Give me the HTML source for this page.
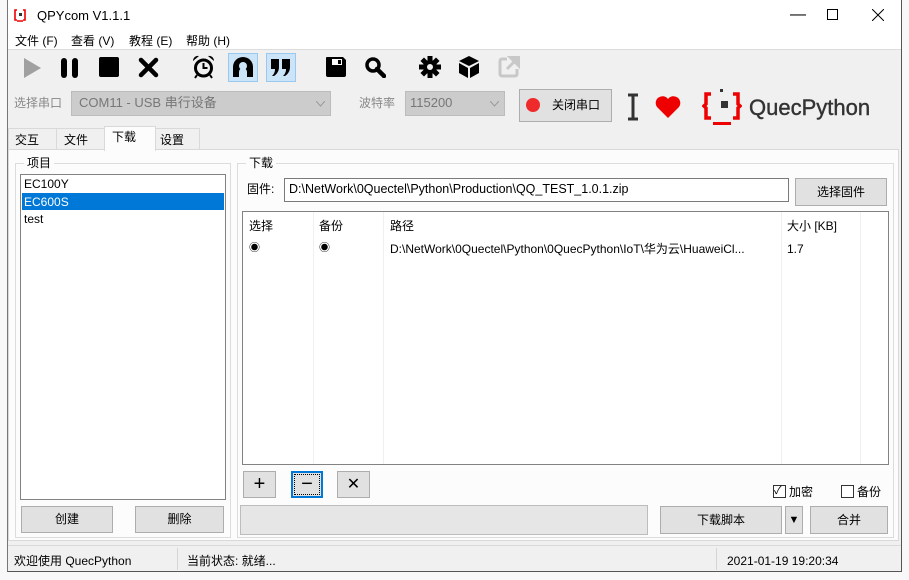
<!DOCTYPE html>
<html><head><meta charset="utf-8"><style>
*{box-sizing:border-box;margin:0;padding:0}
body{width:909px;height:580px;background:#f8f8f8;font-family:"Liberation Sans","Noto Sans CJK SC",sans-serif;font-size:12px;color:#000;position:relative;overflow:hidden}
.a{position:absolute}
.t{position:absolute;white-space:nowrap;line-height:14px}
.btn{position:absolute;background:#e1e1e1;border:1px solid #adadad;text-align:center;font-size:12px}
.white{background:#fff}
svg{position:absolute}
</style></head><body>
<div class="a" style="left:7px;top:0;width:895px;height:572px;border-left:1px solid #777;border-right:1px solid #555;border-bottom:1px solid #555;background:#f0f0f0"></div>
<div class="a" style="left:8px;top:0;width:893px;height:50px;background:#fff;border-bottom:1px solid #ddd"></div>
<!-- title -->
<svg style="left:13px;top:8px" width="14" height="14" viewBox="0 0 14 14"><path d="M4 2H2v10h2M10 2h2v10h-2M4 13h6" stroke="#e00" stroke-width="1.6" fill="none"/><rect x="6" y="5" width="3" height="3" fill="#333"/></svg>
<div class="t" style="left:37px;top:9px;font-size:13px">QPYcom V1.1.1</div>
<div class="t" style="left:790px;top:8px;font-size:16px">&#x2014;</div>
<div class="a" style="left:827px;top:9px;width:11px;height:11px;border:1px solid #000"></div>
<svg style="left:872px;top:9px" width="12" height="12"><path d="M0 0L12 12M12 0L0 12" stroke="#000" stroke-width="1"/></svg>
<div class="t" style="left:15px;top:34px">文件 (F)</div>
<div class="t" style="left:71px;top:34px">查看 (V)</div>
<div class="t" style="left:129px;top:34px">教程 (E)</div>
<div class="t" style="left:186px;top:34px">帮助 (H)</div>
<!-- toolbar -->
<svg style="left:22px;top:57px" width="20" height="22"><path d="M2 1L19 11L2 21Z" fill="#a0a0a0"/></svg>
<svg style="left:60px;top:57px" width="20" height="22"><rect x="1" y="1" width="6" height="20" rx="3" fill="#000"/><rect x="12" y="1" width="6" height="20" rx="3" fill="#000"/></svg>
<svg style="left:99px;top:57px" width="21" height="21"><rect x="0" y="0" width="20" height="20" rx="2" fill="#000"/></svg>
<svg style="left:138px;top:57px" width="21" height="21"><path d="M3 3L18 18M18 3L3 18" stroke="#000" stroke-width="4.5" stroke-linecap="round"/></svg>
<svg style="left:192px;top:55px" width="23" height="24" viewBox="0 0 23 24"><circle cx="11.5" cy="13" r="8" fill="none" stroke="#000" stroke-width="3"/><path d="M11.5 8v5h4" stroke="#000" stroke-width="2" fill="none"/><path d="M1 6a5 5 0 0 1 6-5zM22 6a5 5 0 0 0-6-5z" fill="#000"/><path d="M5 20l-2 3M18 20l2 3" stroke="#000" stroke-width="2"/></svg>
<div class="a" style="left:228px;top:53px;width:30px;height:29px;background:#cce4f7;border:1px solid #99c9ef"></div>
<svg style="left:232px;top:56px" width="22" height="22" viewBox="0 0 22 22"><path d="M11 1a10 10 0 0 0-10 10v10h6v-5a4 4 0 0 1 8 0v5h6v-10A10 10 0 0 0 11 1z" fill="#000"/><circle cx="11" cy="10" r="4" fill="#cce4f7"/><circle cx="11" cy="16" r="2" fill="#cce4f7"/></svg>
<div class="a" style="left:266px;top:53px;width:30px;height:29px;background:#cce4f7;border:1px solid #99c9ef"></div>
<svg style="left:270px;top:58px" width="22" height="20" viewBox="0 0 22 20"><path d="M1 1h8v8c0 4-2 7-5 9H2c2-2 3-4 3-7H1zM12 1h8v8c0 4-2 7-5 9h-2c2-2 3-4 3-7h-4z" fill="#000"/></svg>
<svg style="left:325px;top:56px" width="22" height="22" viewBox="0 0 22 22"><path d="M1 2a1 1 0 0 1 1-1h16l3 3v15a2 2 0 0 1-2 2H3a2 2 0 0 1-2-2z" fill="#000"/><rect x="7" y="3" width="10" height="6" fill="#fff"/><rect x="13" y="4" width="3" height="4" fill="#000"/></svg>
<svg style="left:364px;top:56px" width="22" height="22"><circle cx="9" cy="9" r="6" fill="none" stroke="#000" stroke-width="3.5"/><path d="M13 13l7 7" stroke="#000" stroke-width="4.5" stroke-linecap="round"/></svg>
<svg style="left:419px;top:56px" width="22" height="22" viewBox="0 0 22 22"><g fill="#000"><circle cx="11" cy="11" r="7"/><rect x="8.5" y="0" width="5" height="22"/><rect x="0" y="8.5" width="22" height="5"/><rect x="8.5" y="0" width="5" height="22" transform="rotate(45 11 11)"/><rect x="8.5" y="0" width="5" height="22" transform="rotate(-45 11 11)"/></g><circle cx="11" cy="11" r="3" fill="#f0f0f0"/></svg>
<svg style="left:458px;top:55px" width="22" height="24" viewBox="0 0 22 24"><path d="M11 1L21 6L11 11L1 6Z" fill="#000"/><path d="M1 8L10 13V23L1 18ZM21 8L12 13V23L21 18Z" fill="#000"/></svg>
<svg style="left:498px;top:56px" width="22" height="22" viewBox="0 0 22 22"><path d="M9 3H4a2 2 0 0 0-2 2v13a2 2 0 0 0 2 2h13a2 2 0 0 0 2-2v-5" fill="none" stroke="#c8c8c8" stroke-width="3"/><path d="M12 1h9v9zM20 2L9 13" stroke="#c8c8c8" stroke-width="3" fill="#c8c8c8"/></svg>
<!-- row 2 -->
<div class="t" style="left:14px;top:96px;color:#888">选择串口</div>
<div class="a" style="left:71px;top:91px;width:260px;height:25px;background:#ccc;border:1px solid #bcbcbc"></div>
<div class="t" style="left:79px;top:96px;color:#777;font-size:13px">COM11 - USB 串行设备</div>
<svg style="left:316px;top:101px" width="9" height="6"><path d="M0 0L4.5 5L9 0" stroke="#999" fill="none"/></svg>
<div class="t" style="left:359px;top:96px;color:#888">波特率</div>
<div class="a" style="left:405px;top:91px;width:100px;height:25px;background:#ccc;border:1px solid #bcbcbc"></div>
<div class="t" style="left:410px;top:96px;color:#777;font-size:13px">115200</div>
<svg style="left:490px;top:101px" width="9" height="6"><path d="M0 0L4.5 5L9 0" stroke="#999" fill="none"/></svg>
<div class="btn" style="left:519px;top:89px;width:93px;height:33px"></div>
<div class="a" style="left:526px;top:98px;width:14px;height:14px;border-radius:50%;background:#ee2a2a"></div>
<div class="t" style="left:552px;top:98px">关闭串口</div>
<svg style="left:626px;top:93px" width="14" height="28"><path d="M2 2h10M7 2v24M2 26h10" stroke="#333" stroke-width="3"/></svg>
<svg style="left:655px;top:95px" width="26" height="24" viewBox="0 0 26 24"><path d="M13 23L2 12A6.5 6.5 0 0 1 13 4A6.5 6.5 0 0 1 24 12Z" fill="#e00"/></svg>
<svg style="left:702px;top:87px" width="40" height="40" viewBox="0 0 40 40"><path d="M9 7H4v10l-2 2 2 2v10h5M31 7h5v10l2 2-2 2v10h-5" stroke="#e00" stroke-width="3.5" fill="none"/><rect x="11" y="35" width="18" height="3" fill="#e00"/><rect x="18" y="2" width="3" height="3" fill="#333"/><rect x="19" y="14" width="7" height="7" fill="#333"/></svg>
<div class="t" style="left:749px;top:96px;font-size:22px;line-height:24px;color:#333;-webkit-text-stroke:0.4px #333">QuecPython</div>
<!-- tabs -->
<div class="a" style="left:8px;top:149px;width:891px;height:392px;border:1px solid #d9d9d9;background:#fcfcfc"></div>
<div class="a" style="left:8px;top:128px;width:49px;height:22px;border:1px solid #d9d9d9;background:#f0f0f0"></div>
<div class="a" style="left:56px;top:128px;width:49px;height:22px;border:1px solid #d9d9d9;background:#f0f0f0"></div>
<div class="a" style="left:104px;top:126px;width:52px;height:25px;border:1px solid #d9d9d9;border-bottom:none;background:#fcfcfc"></div>
<div class="a" style="left:155px;top:128px;width:45px;height:22px;border:1px solid #d9d9d9;background:#f0f0f0"></div>
<div class="t" style="left:15px;top:133px">交互</div>
<div class="t" style="left:64px;top:133px">文件</div>
<div class="t" style="left:112px;top:130px">下载</div>
<div class="t" style="left:160px;top:133px">设置</div>
<!-- group 项目 -->
<div class="a" style="left:15px;top:163px;width:216px;height:375px;border:1px solid #dcdcdc"></div>
<div class="t" style="left:24px;top:156px;background:#fcfcfc;padding:0 3px">项目</div>
<div class="a white" style="left:20px;top:174px;width:206px;height:326px;border:1px solid #828282"></div>
<div class="a" style="left:22px;top:193px;width:202px;height:17px;background:#0078d7"></div>
<div class="t" style="left:24px;top:177px">EC100Y</div>
<div class="t" style="left:24px;top:195px;color:#fff">EC600S</div>
<div class="t" style="left:24px;top:212px">test</div>
<div class="btn" style="left:21px;top:506px;width:92px;height:27px;line-height:25px">创建</div>
<div class="btn" style="left:135px;top:506px;width:89px;height:27px;line-height:25px">删除</div>
<!-- group 下载 -->
<div class="a" style="left:237px;top:163px;width:657px;height:375px;border:1px solid #dcdcdc"></div>
<div class="t" style="left:246px;top:156px;background:#fcfcfc;padding:0 3px">下载</div>
<div class="t" style="left:247px;top:182px">固件:</div>
<div class="a white" style="left:284px;top:178px;width:505px;height:24px;border:1px solid #7a7a7a"></div>
<div class="t" style="left:289px;top:182px;font-size:12.5px">D:\NetWork\0Quectel\Python\Production\QQ_TEST_1.0.1.zip</div>
<div class="btn" style="left:795px;top:178px;width:92px;height:28px;line-height:26px">选择固件</div>
<div class="a white" style="left:242px;top:211px;width:647px;height:254px;border:1px solid #828282"></div>
<div class="a" style="left:313px;top:212px;width:1px;height:252px;background:#f0f0f0"></div>
<div class="a" style="left:383px;top:212px;width:1px;height:252px;background:#f0f0f0"></div>
<div class="a" style="left:781px;top:212px;width:1px;height:252px;background:#f0f0f0"></div>
<div class="a" style="left:860px;top:212px;width:1px;height:252px;background:#f0f0f0"></div>
<div class="t" style="left:249px;top:219px">选择</div>
<div class="t" style="left:319px;top:219px">备份</div>
<div class="t" style="left:390px;top:219px">路径</div>
<div class="t" style="left:787px;top:219px">大小 [KB]</div>
<div class="t" style="left:249px;top:241px;font-size:11px">&#x25C9;</div>
<div class="t" style="left:319px;top:241px;font-size:11px">&#x25C9;</div>
<div class="t" style="left:390px;top:242px">D:\NetWork\0Quectel\Python\0QuecPython\IoT\华为云\HuaweiCl...</div>
<div class="t" style="left:787px;top:242px">1.7</div>
<div class="btn" style="left:243px;top:471px;width:33px;height:27px;font-size:20px;line-height:24px">+</div>
<div class="btn" style="left:291px;top:471px;width:32px;height:27px;border:2px solid #0078d7;font-size:20px;line-height:22px">&#x2212;</div>
<div class="a" style="left:294px;top:474px;width:26px;height:21px;border:1px dotted #000"></div>
<div class="btn" style="left:337px;top:471px;width:33px;height:27px;font-size:16px;line-height:25px">&#x2715;</div>
<div class="a white" style="left:773px;top:485px;width:13px;height:13px;border:1px solid #333"></div>
<div class="t" style="left:774px;top:484px;font-size:11px">&#x2713;</div>
<div class="t" style="left:789px;top:485px">加密</div>
<div class="a white" style="left:841px;top:485px;width:13px;height:13px;border:1px solid #333"></div>
<div class="t" style="left:857px;top:485px">备份</div>
<div class="a" style="left:240px;top:505px;width:408px;height:30px;background:#e6e6e6;border:1px solid #bcbcbc"></div>
<div class="btn" style="left:660px;top:506px;width:122px;height:28px;line-height:26px">下载脚本</div>
<div class="btn" style="left:785px;top:506px;width:18px;height:28px;line-height:26px;font-size:11px">&#x25BC;</div>
<div class="btn" style="left:810px;top:506px;width:78px;height:28px;line-height:26px">合并</div>
<!-- status -->
<div class="a" style="left:8px;top:545px;width:893px;height:1px;background:#dadada"></div>
<div class="t" style="left:14px;top:554px">欢迎使用 QuecPython</div>
<div class="a" style="left:177px;top:548px;width:1px;height:22px;background:#d5d5d5"></div>
<div class="t" style="left:187px;top:554px">当前状态: 就绪...</div>
<div class="a" style="left:716px;top:548px;width:1px;height:22px;background:#d5d5d5"></div>
<div class="t" style="left:727px;top:554px">2021-01-19 19:20:34</div>
</body></html>
